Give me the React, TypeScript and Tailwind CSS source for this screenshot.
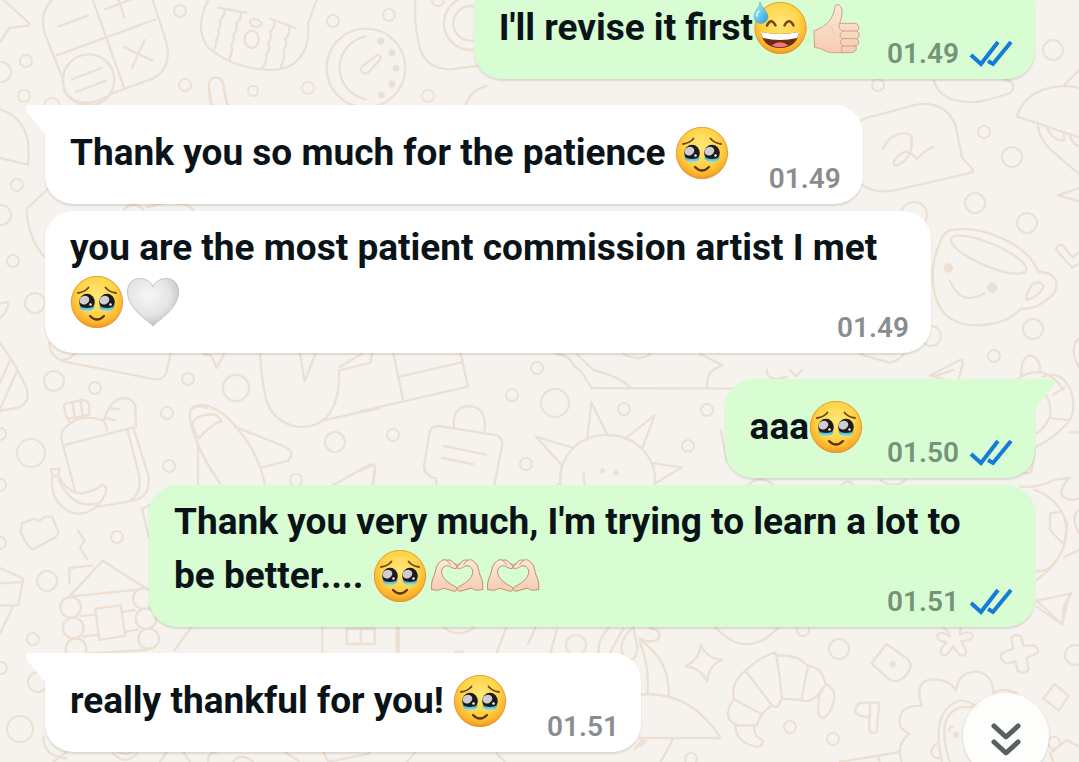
import { Fragment } from 'react'

type EmojiKey = 'pleading' | 'sweat' | 'thumb' | 'heart' | 'hands'

interface Message {
  id: number
  mine: boolean
  first: boolean
  parts: Array<{ text?: string; emoji?: EmojiKey }>
  time: string
}

const messages: Message[] = [
  { id: 1, mine: true, first: false, parts: [{ text: "I'll revise it first" }, { emoji: 'sweat' }, { emoji: 'thumb' }], time: '01.49' },
  { id: 2, mine: false, first: true, parts: [{ text: 'Thank you so much for the patience ' }, { emoji: 'pleading' }], time: '01.49' },
  {
    id: 3,
    mine: false,
    first: false,
    parts: [{ text: 'you are the most patient commission artist I met ' }, { emoji: 'pleading' }, { emoji: 'heart' }],
    time: '01.49',
  },
  { id: 4, mine: true, first: true, parts: [{ text: 'aaa' }, { emoji: 'pleading' }], time: '01.50' },
  {
    id: 5,
    mine: true,
    first: false,
    parts: [
      { text: "Thank you very much, I'm trying to learn a lot to be better.... " },
      { emoji: 'pleading' },
      { emoji: 'hands' },
      { emoji: 'hands' },
    ],
    time: '01.51',
  },
  { id: 6, mine: false, first: true, parts: [{ text: 'really thankful for you! ' }, { emoji: 'pleading' }], time: '01.51' },
]

const emojiLabels: Record<EmojiKey, string> = {
  pleading: 'Face holding back tears',
  sweat: 'Grinning face with sweat',
  thumb: 'Thumbs up',
  heart: 'White heart',
  hands: 'Heart hands',
}

const emojiBoxes: Record<EmojiKey, string> = {
  pleading: '0 0 56 52',
  sweat: '0 0 56 52',
  thumb: '206 2 168 156',
  heart: '0 0 56 52',
  hands: '213 27 168 156',
}

function EmojiDefs() {
  return (
    <svg className="absolute h-0 w-0" aria-hidden="true">
      <defs>
        <radialGradient id="face" cx="50%" cy="38%" r="64%">
          <stop offset="0" stopColor="#ffe878" />
          <stop offset="0.55" stopColor="#ffd54a" />
          <stop offset="0.82" stopColor="#fcb62e" />
          <stop offset="1" stopColor="#ee8f1c" />
        </radialGradient>
        <linearGradient id="tear" x1="0" y1="0" x2="0" y2="1">
          <stop offset="0" stopColor="#2f9db8" />
          <stop offset="1" stopColor="#93ecec" />
        </linearGradient>
        <linearGradient id="drop" x1="0" y1="0" x2="1" y2="1">
          <stop offset="0" stopColor="#b9ecf8" />
          <stop offset="0.5" stopColor="#6cc9ea" />
          <stop offset="1" stopColor="#2a9bcb" />
        </linearGradient>
        <radialGradient id="heart" cx="42%" cy="35%" r="70%">
          <stop offset="0" stopColor="#f7f7f7" />
          <stop offset="0.6" stopColor="#e4e4e5" />
          <stop offset="1" stopColor="#bcbcbf" />
        </radialGradient>
        <linearGradient id="skin" x1="0" y1="0" x2="0" y2="1">
          <stop offset="0" stopColor="#fce9da" />
          <stop offset="1" stopColor="#f5ccb0" />
        </linearGradient>
      </defs>
    </svg>
  )
}

function Eye({ x }: { x: number }) {
  return (
    <g transform={`translate(${x} 26)`}>
      <ellipse cy="0" rx="7.800" ry="8.300" fill="#1c1a1c" />
      <path d="M-7.500 4 Q0 8 7.500 4 C7 11 -7 11 -7.500 4Z" fill="url(#tear)" />
      <ellipse cx="-1.500" cy="-2.800" rx="5" ry="4.200" fill="#cfcdd2" transform="rotate(-25)" />
      <circle cx="3.500" cy="2.500" r="1.200" fill="#fff" />
    </g>
  )
}

function EmojiArt({ name }: { name: EmojiKey }) {
  if (name === 'pleading') {
    return (
      <g fill="none" strokeLinecap="round">
        <circle cx="27" cy="26" r="25.700" fill="url(#face)" stroke="#e08f28" strokeWidth="0.800" />
        <Eye x={17} />
        <Eye x={37} />
        <path d="M8 17 Q15 16 18.500 11.500" stroke="#6f4315" strokeWidth="1.800" />
        <path d="M46 17 Q39 16 35.500 11.500" stroke="#6f4315" strokeWidth="1.800" />
        <path d="M20 40 Q27 47 34 40" stroke="#5c3210" strokeWidth="2.200" />
      </g>
    )
  }
  if (name === 'sweat') {
    return (
      <g fill="none" strokeLinecap="round">
        <circle cx="27.500" cy="26" r="25.700" fill="url(#face)" stroke="#e08f28" strokeWidth="0.800" />
        <path d="M14 23.500 Q18 15 22.500 23.500" stroke="#7d4311" strokeWidth="2.500" />
        <path d="M31.500 23.500 Q36 15 40.500 23.500" stroke="#7d4311" strokeWidth="2.500" />
        <path d="M8 30 Q27 34 46 30 C45 40 38 46 27 46 C16 46 9 40 8 30Z" fill="#6b2b16" />
        <path d="M8 30 Q27 34 46 30 Q45.500 34 44 36 Q27 40 10 36 Q8.500 34 8 30Z" fill="#fff" />
        <path d="M18.500 43.500 Q27 37 35.500 43.500 Q27 47 18.500 43.500Z" fill="#f2777f" />
        <path d="M7 0 C9 6 15 10 15 15 A7 6.500 0 0 1 1 15 C1 9 6 7 7 0Z" fill="url(#drop)" stroke="#3aa6d3" strokeWidth="0.500" />
        <path d="M4 14 Q4 11 6 9" stroke="#e6fafe" strokeWidth="1.500" />
      </g>
    )
  }
  if (name === 'heart') {
    return (
      <path
        d="M27 50 C22 44 1.500 33 1.500 16 C1.500 7 7 2.500 14 2.500 C20 2.500 25 6 27 11 C29 6 34 2.500 40 2.500 C47 2.500 52.500 7 52.500 16 C52.500 33 32 44 27 50Z"
        fill="url(#heart)"
        stroke="#b9b9bb"
        strokeWidth="0.800"
      />
    )
  }
  if (name === 'thumb') {
    return (
      <g stroke="#cfa088" strokeWidth="3" strokeLinejoin="round" strokeLinecap="round">
        <path
          d="M222 88 C240 82 254 73 264 62 C277 47 281 34 284 17 C286 7 299 8 303 20 C308 36 303 52 298 66 L342 66 C357 66 359 84 350 89 C360 94 358 109 350 112 C358 118 356 132 346 134 C351 142 346 154 333 154 L280 154 C254 154 246 139 224 139 Z"
          fill="url(#skin)"
        />
        <path d="M298 66 C293 76 299 89 310 89 L350 89 M310 89 C296 92 296 111 308 112 L350 112 M308 112 C297 116 299 132 308 134 L346 134 M308 134 C300 139 302 150 308 154" fill="none" />
        <path d="M264 70 Q280 82 281 98" fill="none" stroke="#efc9b2" />
      </g>
    )
  }
  return (
    <g fill="url(#skin)" stroke="#bd8d72" strokeWidth="3" strokeLinejoin="round" strokeLinecap="round">
      <path d="M221 145 C219 128 222 116 229 102 C234 90 232 79 240 69 C249 56 261 54 266 58 C276 54 284 61 289 68 C296 69 300 75 297 81 C289 85 280 80 274 75 C257 71 247 86 252 100 C258 119 279 130 293 137 C299 142 297 150 290 151 C276 148 265 143 254 142 C244 149 234 149 221 145Z" />
      <path d="M374 145 C376 128 373 116 366 102 C361 90 363 79 355 69 C346 56 334 54 329 58 C319 54 311 61 306 68 C299 69 295 75 298 81 C306 85 315 80 321 75 C338 71 348 86 343 100 C337 119 316 130 302 137 C296 142 298 150 305 151 C319 148 330 143 341 142 C351 149 361 149 374 145Z" />
      <path d="M266 58 Q272 62 278 70 M289 68 Q293 73 297 76 M329 58 Q323 62 317 70 M306 68 Q302 73 298 76" fill="none" />
    </g>
  )
}

function Emoji({ name }: { name: EmojiKey }) {
  return (
    <svg
      role="img"
      aria-label={emojiLabels[name]}
      viewBox={emojiBoxes[name]}
      className="mt-[7px] inline-block h-[52px] w-14 align-[-14px]"
    >
      <EmojiArt name={name} />
    </svg>
  )
}

function ReadTicks() {
  return (
    <svg viewBox="0 0 44 28" className="h-7 w-11" role="img" aria-label="Read" fill="none" stroke="#147bd8" strokeWidth="4">
      <path d="M2 15 L12 24 L29 2" />
      <path d="M19 21 L24 24 L42 2" />
    </svg>
  )
}

function Tail({ mine }: { mine: boolean }) {
  return (
    <svg
      viewBox="0 0 20 32"
      aria-hidden="true"
      className={
        mine
          ? 'absolute top-0 -right-[19px] h-8 w-5 -scale-x-100 fill-[#d8fdd2]'
          : 'absolute top-0 -left-[19px] h-8 w-5 fill-white'
      }
    >
      <path d="M20 0H3C0 0 -1 4 1 7L20 30Z" />
    </svg>
  )
}

function Bubble({ message }: { message: Message }) {
  const { mine, first, parts, time } = message
  const corner = first ? (mine ? 'rounded-tr-none' : 'rounded-tl-none') : ''
  return (
    <li
      className={`relative grid max-w-[886px] rounded-[28px] shadow-[0_2px_2px_rgba(60,50,40,0.14)] ${corner} ${
        mine ? 'self-end bg-[#d8fdd2]' : 'self-start bg-white'
      } ${first ? 'mt-[26px]' : 'mt-[7px]'}`}
    >
      {first && <Tail mine={mine} />}
      <p className="col-start-1 row-start-1 pt-[15px] pr-[30px] pb-[25px] pl-[25px] text-[37px] leading-[43px] font-bold text-[#0a1418]">
        {parts.map((part, idx) => (
          <Fragment key={idx}>
            {part.text}
            {part.emoji && <Emoji name={part.emoji} />}
          </Fragment>
        ))}
        <span className={mine ? 'inline-block w-[140px]' : 'inline-block w-[102px]'} />
      </p>
      <div
        className={`col-start-1 row-start-1 flex items-center gap-[10px] self-end justify-self-end pr-[22px] pb-[9px] text-[28px] leading-8 font-semibold ${
          mine ? 'text-[#76937a]' : 'text-[#8a8d8f]'
        }`}
      >
        <time>{time}</time>
        {mine && <ReadTicks />}
      </div>
    </li>
  )
}

// small rings scattered between the doodles: cx, cy, r
const rings = [
  [1, 72, 10], [26, 61, 6], [24, 96, 6], [180, 11, 6], [333, 21, 6], [389, 15, 6], [185, 85, 6], [253, 91, 5],
  [308, 88, 6], [428, 96, 6], [52, 106, 8], [438, 0, 6], [1053, 50, 10], [878, 85, 6], [984, 132, 6], [1012, 157, 10],
  [975, 203, 10], [1027, 223, 10], [914, 215, 13], [931, 336, 10], [1033, 329, 10], [994, 356, 6], [17, 185, 6],
  [1, 215, 10], [13, 261, 6], [35, 303, 10], [54, 381, 10], [95, 388, 6], [188, 379, 6], [236, 388, 13], [167, 413, 6],
  [31, 453, 14], [0, 434, 6], [0, 485, 6], [169, 466, 6], [335, 442, 10], [296, 480, 6], [117, 537, 6], [0, 543, 6],
  [47, 581, 10], [33, 639, 6], [1, 668, 6], [38, 682, 10], [20, 729, 13], [393, 435, 6], [512, 395, 6], [537, 368, 6],
  [555, 403, 14], [526, 464, 6], [624, 409, 6], [707, 410, 6], [688, 446, 6], [803, 630, 6], [839, 649, 10],
  [790, 727, 6], [833, 739, 6], [691, 759, 6], [1075, 655, 10], [1054, 743, 6], [125, 742, 12], [576, 645, 10],
]

function Wallpaper() {
  return (
    <svg className="absolute inset-0 h-full w-full" aria-hidden="true" fill="none" stroke="#ecdfd3" strokeWidth="2" strokeLinecap="round" strokeLinejoin="round">
      {rings.map(([cx, cy, r]) => (
        <circle key={`${cx}-${cy}`} cx={cx} cy={cy} r={r} />
      ))}
      {/* calculator, pot, kitchen timer */}
      <g transform="scale(0.3333)" strokeWidth="7">
        <path d="M0 -10 L88 70 Q92 76 84 77 L28 84 L0 126" />
        <path d="M190 -20 Q115 10 132 95 L190 240 M275 -10 L372 262 M170 166 L466 58 M455 -10 L500 130 Q515 205 460 235 L336 280 M176 79 L264 47 M315 28 L400 -5 M352 -12 L374 54 M374 142 L457 182 M434 120 L396 204" />
        <circle cx="266" cy="240" r="77" />
        <path d="M216 238 L304 204 M228 276 L318 242" />
        <path d="M630 -10 C585 70 602 130 640 155 C720 215 835 220 875 195 C920 165 928 120 924 70 L952 -5 M655 23 L738 38 M673 32 Q676 48 659 60 Q666 76 654 90 Q660 106 648 120 Q652 134 642 148 M722 40 Q726 58 708 70 Q714 90 700 104 Q706 120 694 134 Q700 150 688 180 M812 56 L886 84 M822 66 Q826 84 810 96 Q818 114 804 130 Q812 150 798 166 Q804 182 786 204 M868 84 Q870 104 856 116 Q864 134 850 150 Q858 172 842 200 M750 66 Q750 54 768 58 Q784 62 785 72 Q780 82 766 80 Q752 80 750 66" />
        <ellipse cx="755" cy="118" rx="21" ry="26" />
        <path d="M632 320 L626 260 Q626 234 646 232 Q666 232 670 252 L682 320" />
        <circle cx="1098" cy="204" r="118" />
        <path d="M1098 109 A96 96 0 0 0 1098 298 M1086 200 L1128 168 Q1138 162 1142 170 Q1144 176 1136 184 L1106 216 A12 12 0 0 1 1086 200" />
        <g fill="#ecdfd3">
          <circle cx="1142" cy="124" r="7" /><circle cx="1176" cy="158" r="7" /><circle cx="1188" cy="205" r="7" /><circle cx="1176" cy="252" r="7" /><circle cx="1144" cy="285" r="7" />
        </g>
        <path d="M1246 0 Q1242 80 1260 145 Q1280 206 1350 208 L1460 194" />
        <circle cx="1412" cy="70" r="80" />
        <circle cx="1412" cy="70" r="52" />
        <path d="M1395 320 Q1410 270 1460 258" />
      </g>
      {/* left side shapes beside the first messages */}
      <g transform="translate(0 90) scale(0.3333)" strokeWidth="7">
        <path d="M0 58 Q100 90 84 224 L0 204 M190 0 Q240 70 330 15 M628 0 L636 48 M672 0 L684 48 M146 295 L80 356 Q82 440 132 500 M0 640 L26 636 Q22 670 0 684" />
        <path d="M372 358 Q400 330 430 358 M440 352 L490 340 M530 340 Q565 340 580 360" />
      </g>
      {/* speech bubble, mug, lamp */}
      <g transform="translate(860 70) scale(0.3333)" strokeWidth="7">
        <path d="M222 30 C236 95 320 105 382 90 L442 72 C468 64 466 30 434 30 M0 154 Q20 140 50 136 L160 106 C250 84 286 150 290 182 L306 262 L338 298 Q344 306 332 309 L110 360 Q40 374 0 340 M70 236 C86 190 145 180 154 200 C158 230 154 256 130 274 C104 298 90 285 110 262 C135 238 150 240 170 268 Q195 240 222 230" />
        <path d="M612 46 L657 0 M470 139 C490 80 550 40 640 50 L670 58 M470 139 L657 202 M534 168 Q536 200 570 238 L657 312 M562 176 Q582 216 614 210 L612 192 M630 198 Q640 225 657 228 M657 354 L594 376 L657 394" />
        <path d="M218 600 C222 560 234 530 244 506 Q254 484 276 480 C370 466 500 520 536 606 C592 606 605 650 570 682 Q528 720 482 716 C440 768 330 780 275 748 Q215 710 218 600Z" />
        <ellipse cx="386" cy="554" rx="122" ry="34" transform="rotate(23 386 554)" />
        <path d="M270 632 Q300 710 374 670 M518 640 Q546 632 551 650 Q538 680 500 690 Q495 678 518 640Z" />
        <circle cx="265" cy="594" r="11" fill="#ecdfd3" /><circle cx="397" cy="653" r="12" fill="#ecdfd3" />
        <path d="M657 548 L638 562 L610 528 Q594 518 588 540 L636 592 L657 582 M657 804 Q625 840 657 890 M0 852 Q55 870 90 878 Q120 870 134 850 M210 916 L300 870 Q310 866 308 882 L296 930 M210 916 L250 928 M484 920 Q482 862 510 856 Q540 860 540 900 M470 930 Q550 870 610 960" />
      </g>
      {/* lunch bag, surfboard, cabin */}
      <g transform="translate(0 340) scale(0.3333)" strokeWidth="7">
        <path d="M0 10 Q40 60 78 140 Q96 190 50 204 L0 212 M28 64 L0 130 M50 96 L0 208 M148 10 Q150 50 190 64 L465 118 Q492 120 500 96 L512 40 M180 60 Q210 60 226 40 M610 42 L634 46 L650 84 L672 42 M780 40 Q790 180 812 210 C860 280 960 275 995 210 Q1022 160 1016 92 L1112 68 L1116 42 M900 42 L914 124 L946 42 M1020 80 L1085 42 M966 242 L1140 204" />
        <path d="M198 228 L192 200 Q192 188 210 188 L246 180 Q264 180 268 196 L268 224 L204 236Z M218 192 L224 230 M242 186 L248 226 M204 236 L212 250 Q178 270 185 300 L226 456 M212 250 Q245 220 312 242 M190 316 L400 262 L446 410 Q452 470 400 482 L296 500 M382 268 L416 400 Q428 460 390 482 M312 242 C330 170 385 156 406 196 L408 260 M312 242 L322 272 M332 204 L358 208 M318 234 L346 242 M152 388 L178 385 L176 408 Q200 460 250 460 Q290 450 306 434 Q322 438 318 458 C280 540 200 540 164 470 Q150 430 158 408Z M158 408 L176 408 M176 420 Q220 510 290 490" />
        <path d="M66 550 L104 536 L116 544 L136 530 L156 530 L176 578 L166 592 L100 628 Q86 628 62 576Z M234 572 L254 602 L240 622 L262 658 M426 506 L460 492 M426 506 L446 590 M0 684 L70 716 L54 796 L0 796 M0 730 L66 726 M38 802 L0 880" />
        <path d="M594 440 L594 320 M660 430 C590 330 550 220 580 200 C620 180 680 220 720 276 Q775 340 794 430 M596 296 Q560 240 600 230 Q650 210 664 244 Q630 254 596 296Z M574 208 Q600 190 620 204 M704 260 L850 318 Q890 334 864 362 L782 384 M990 440 L1108 374 Q1130 370 1124 390 L1118 432" />
        <path d="M208 770 L308 662 L440 746Z M208 730 L208 684 L276 676 M286 806 L362 796 L376 888 L298 900Z M244 828 L286 824 M366 816 L404 810 M248 890 L298 884 M376 876 L414 868 M524 930 L574 862 M967 862 V980 M1040 866 H1124 V912 H1040Z M1082 866 V912 M270 940 L440 930" />
        <circle cx="212" cy="802" r="31" /><circle cx="220" cy="864" r="31" /><circle cx="228" cy="926" r="31" /><circle cx="430" cy="776" r="31" /><circle cx="438" cy="836" r="31" /><circle cx="446" cy="896" r="31" />
      </g>
      {/* tag, sun, books */}
      <g transform="translate(360 340) scale(0.3333)" strokeWidth="7">
        <path d="M100 40 L130 182 M118 110 L302 68 M302 40 L324 140 L0 214 M590 42 Q632 46 640 76 L665 96 L694 144 L1140 146 M650 42 L700 90 Q780 110 812 144 M1020 42 L1088 76 Q1035 92 1042 144 M790 42 Q840 66 870 42" />
        <path d="M282 262 Q276 198 330 198 Q380 202 374 272 M236 258 L400 284 Q432 290 426 318 L402 440 M236 258 Q212 258 208 280 L192 380 Q192 405 228 416 L230 440 M252 318 L378 344 M246 354 L338 372 M0 392 L36 376 Q48 376 44 398 L38 440" />
        <path d="M602 440 C590 340 670 280 742 286 C820 282 896 350 884 440 M682 298 L694 186 L742 284 M796 296 L884 226 L848 322 M640 324 L528 290 L604 374 M880 370 L966 382 L886 430 M672 398 Q668 420 678 440 M582 440 L604 430 M1082 270 L1100 360 L1140 400" />
        <circle cx="728" cy="392" r="4" fill="#ecdfd3" /><circle cx="768" cy="399" r="4" fill="#ecdfd3" />
      </g>
      {/* lobster, globe, fish on the right edge */}
      <g transform="translate(720 370) scale(0.3333)" strokeWidth="7">
        <path d="M970 20 C1040 -10 1080 90 1050 150 Q1010 200 950 230 M940 40 Q1000 80 990 140 Q970 180 950 190 M1000 74 L1035 50 M995 145 L1045 150 M1050 186 L1077 188 M945 240 L935 300 Q930 315 910 308 M900 350 Q960 355 1000 330 L1050 322 Q1020 350 1025 375 Q1040 395 1077 386 M945 360 C1060 400 1080 540 950 630 M990 430 L1025 425 L1042 460 L1032 524 L990 480Z M1077 540 L1032 562 M1008 570 Q990 605 950 604 M1077 420 Q1050 440 1077 490 M950 692 L1055 670 L1032 706 L1027 764Z M85 345 Q120 310 160 345 M365 345 Q382 325 400 345 M480 330 Q525 360 555 330 M140 0 Q145 40 200 20 M210 0 L230 20 L245 0 M640 20 L700 0" />
      </g>
      {/* star, croissant, lion, flower, cross */}
      <g transform="translate(640 600) scale(0.3333)" strokeWidth="7">
        <path d="M182 134 Q198 174 246 180 Q205 196 202 244 Q180 202 136 198 Q180 180 182 134Z M225 80 Q320 185 418 80 M0 130 Q30 200 22 284 M0 120 Q90 180 86 284 M30 84 Q70 90 54 118 Q30 132 0 116 M0 284 Q150 270 242 414 L0 414 M98 420 L62 486 M0 440 L18 422" />
        <path d="M350 376 L294 376 Q262 365 264 340 Q268 310 282 298 Q270 250 316 212 Q360 170 405 158 L412 168 Q470 160 504 198 Q545 200 556 250 Q590 270 582 300 Q570 350 546 354 Q530 350 536 306 Q535 275 560 254 M316 212 L396 316 Q406 324 414 318 L426 296 Q420 230 408 160 M282 298 L364 342 M396 316 Q360 340 350 376 M426 296 L484 300 L504 198 M484 300 Q520 316 556 254 M286 376 Q288 430 350 440 Q370 440 368 420 Q340 410 342 380" />
        <path d="M694 190 L740 132 L796 172 Q824 190 802 220 Q778 254 748 238Z M718 308 H664 Q645 315 646 334 Q652 352 688 350 V390 Q694 404 710 396 L718 308 M690 314 V350" />
        <circle cx="758" cy="193" r="6" fill="#ecdfd3" />
        <path d="M912 84 Q925 92 930 110 Q905 90 892 105 Q890 125 920 126 L904 146 Q896 166 918 166 L940 140 L958 164 Q980 174 978 150 L964 124 Q1000 120 998 108 Q990 88 960 104 L962 84 M1114 112 Q1128 100 1144 110 L1150 138 L1180 136 Q1200 144 1192 160 L1160 174 L1166 208 Q1156 224 1134 214 L1126 184 L1100 190 Q1076 180 1084 160 L1120 146Z M1244 252 L1286 288 L1256 332 L1210 296Z M1190 20 L1266 74 L1284 0" />
        <path d="M785 486 Q768 430 808 402 Q760 380 790 330 Q810 316 846 318 Q820 240 880 238 Q930 238 948 272 Q955 210 1020 216 Q1060 230 1060 280 Q1090 260 1130 280 M906 486 Q870 330 960 302 Q980 300 1010 318 M930 486 Q884 350 960 322 L1000 320 M892 430 Q870 440 876 466 Q890 480 904 472 M926 392 Q930 380 938 380 M600 486 L780 456 M715 470 L718 486 M1230 460 L1280 420 L1317 440 M1230 460 L1240 486" />
        <circle cx="948" cy="404" r="5" fill="#ecdfd3" />
      </g>
      {/* palm trunk and strokes in the gap above the last message */}
      <g transform="translate(380 620) scale(0.3333)" strokeWidth="7">
        <path d="M56 20 V98 M190 20 Q235 60 285 20 M380 20 L350 98 M466 24 L444 72 M530 30 L512 98 M690 20 Q650 60 656 98 M730 26 L690 98 M760 20 Q700 80 740 116 Q770 130 772 80 L760 20 M225 98 Q238 90 250 98 M80 426 L104 400 M350 400 L375 426 M765 388 L790 356" />
      </g>
      {/* strip under the last message */}
      <g transform="translate(0 600) scale(0.3333)" strokeWidth="7">
        <path d="M130 410 Q130 470 200 475 M160 486 L200 456 M340 460 Q375 500 412 460 M480 486 L500 456 M550 456 L570 486 M625 486 Q620 460 650 456 M700 486 Q720 455 760 486 M855 456 L900 486 M970 456 L985 486 L1110 460 M1190 84 V158" />
      </g>
    </svg>
  )
}

function App() {
  return (
    <main className="relative min-h-screen w-full overflow-hidden bg-[#f6f3ee] font-['Roboto',sans-serif]">
      <EmojiDefs />
      <Wallpaper />
      <ul className="relative -mt-[27px] flex flex-col pr-11 pb-2 pl-[45px]">
        {messages.map((message) => (
          <Bubble key={message.id} message={message} />
        ))}
      </ul>
      <button
        type="button"
        aria-label="Scroll to latest message"
        className="absolute right-[30px] -bottom-[17px] flex h-[86px] w-[86px] items-center justify-center rounded-full bg-white/80 shadow-[0_1px_3px_rgba(60,50,40,0.2)]"
      >
        <svg viewBox="0 0 32 36" className="mt-2 h-9 w-8" fill="none" stroke="#586064" strokeWidth="5" strokeLinecap="round" strokeLinejoin="round">
          <path d="M4 4L16 15L28 4M4 20L16 31L28 20" />
        </svg>
      </button>
    </main>
  )
}

export default App
